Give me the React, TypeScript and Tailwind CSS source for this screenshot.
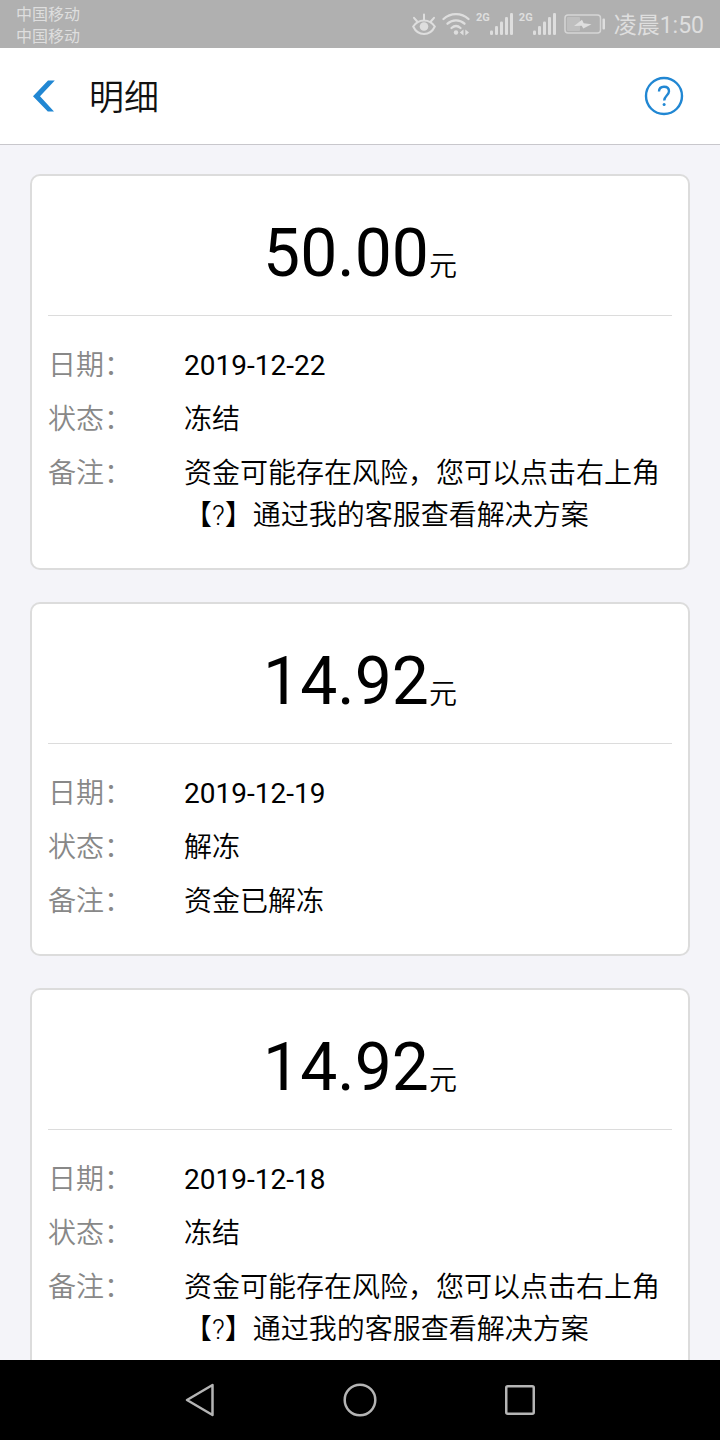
interface FundRecord {
  amount: string;
  date: string;
  status: string;
  remark: string;
}

const RISK_REMARK = "资金可能存在风险，您可以点击右上角【?】通过我的客服查看解决方案";

const records: FundRecord[] = [
  { amount: "50.00", date: "2019-12-22", status: "冻结", remark: RISK_REMARK },
  { amount: "14.92", date: "2019-12-19", status: "解冻", remark: "资金已解冻" },
  { amount: "14.92", date: "2019-12-18", status: "冻结", remark: RISK_REMARK },
];

function EyeIcon() {
  return (
    <svg className="h-6 w-6" viewBox="0 0 24 24" fill="none" stroke="currentColor" strokeWidth="2" strokeLinecap="round">
      <path d="M1.200 14.500C3.500 10.800 7.400 8.400 12 8.400s8.500 2.400 10.800 6.100C20.500 19.400 16.600 22 12 22S3.500 19.400 1.200 14.500Z" />
      <path d="M12 8V2.500M5.200 9.500 2 5.800M18.800 9.500 22 5.800" />
      <circle cx="12" cy="14.500" r="4.300" fill="currentColor" stroke="none" />
    </svg>
  );
}

function WifiIcon() {
  return (
    <svg className="h-6 w-7" viewBox="0 0 28 24" fill="none" stroke="currentColor" strokeWidth="2.300" strokeLinecap="round">
      <path d="M1.500 7C8.500.500 19.500.500 26.500 7" />
      <path d="M5.500 11.700C10.300 7.300 17.700 7.300 22.500 11.700" />
      <path d="M9.500 16C12.200 13.600 15.800 13.600 18.500 16" />
      <circle cx="14" cy="20.500" r="2.200" fill="currentColor" stroke="none" />
      <path d="M21.500 17.500v6L17.800 20.500ZM23.300 17.500v6L27 20.500Z" fill="currentColor" stroke="none" />
    </svg>
  );
}

function SignalIcon() {
  return (
    <span className="flex items-start">
      <span className="text-[11px] leading-3 font-bold">2G</span>
      <svg className="h-6 w-[23px]" viewBox="0 0 23 24" fill="currentColor">
        <rect x="0" y="18.500" width="3" height="4.500" rx="1.300" />
        <rect x="5" y="14" width="3" height="9" rx="1.300" />
        <rect x="10" y="9.500" width="3" height="13.500" rx="1.300" />
        <rect x="15" y="5" width="3" height="18" rx="1.300" />
        <rect x="20" y="1" width="3" height="22" rx="1.300" />
      </svg>
    </span>
  );
}

function BatteryIcon() {
  return (
    <svg className="h-5 w-[42px]" viewBox="0 0 42 20" fill="currentColor">
      <rect x="1" y="1" width="35.500" height="18" rx="3" fill="none" stroke="currentColor" strokeWidth="1.500" opacity="0.8" />
      <rect x="3" y="3" width="13" height="14" rx="1" opacity="0.35" />
      <rect x="38.500" y="4.500" width="2.500" height="11" rx="1" />
      <path d="M10 12 18 5.800 19.700 9.200 27.500 10.300 19.300 14.500 17.700 11.800Z" />
    </svg>
  );
}

function StatusBar() {
  return (
    <div className="flex h-12 shrink-0 items-center justify-between bg-[#b0b0b0] px-4 text-[#dedede]">
      <div className="pt-1 text-base leading-[22px]">
        <p>中国移动</p>
        <p>中国移动</p>
      </div>
      <div className="flex items-center gap-2">
        <div className="flex items-center gap-1.5">
          <EyeIcon />
          <WifiIcon />
          <SignalIcon />
          <SignalIcon />
        </div>
        <BatteryIcon />
        <span className="pt-1 text-[23px] leading-8">凌晨1:50</span>
      </div>
    </div>
  );
}

function Header() {
  return (
    <header className="flex shrink-0 items-center border-b border-[#c8c7cc] bg-white px-8">
      <button type="button" aria-label="返回" className="flex h-24 w-[57px] items-center text-[#2187d3]">
        <svg className="h-8 w-6" viewBox="0 0 24 32" fill="currentColor">
          <path d="M16 .500h6.800L8 16.200 22 31.500h-6.200L1 16.200Z" />
        </svg>
      </button>
      <h1 className="flex-1 pt-1.5 text-[35px] leading-[48px] font-[350] text-[#111]">明细</h1>
      <button type="button" aria-label="帮助" className="p-1 text-[#2187d3]">
        <svg className="h-10 w-10" viewBox="0 0 40 40" fill="none" stroke="currentColor" strokeWidth="2.400">
          <circle cx="20" cy="20" r="18" />
          <path d="M15 15.500C15 12.200 17 10.700 20 10.700s5 1.600 5 4.600c0 3.800-4.800 4.700-4.800 9.200" />
          <circle cx="20.100" cy="28.500" r="1.500" fill="currentColor" stroke="none" />
        </svg>
      </button>
    </header>
  );
}

function RecordCard({ record }: { record: FundRecord }) {
  const rows = [
    { label: "日期：", value: record.date, font: "font-normal" },
    { label: "状态：", value: record.status, font: "font-[350]" },
    { label: "备注：", value: record.remark, font: "font-[350]" },
  ];

  return (
    <li className="shrink-0 rounded-[10px] border-2 border-[#dcdcdc] bg-white px-4 pb-[31px]">
      <p className="flex h-[140px] items-baseline justify-center border-b border-[#dcdcdc] pt-[34px] text-black">
        <span className="text-[66px] leading-[88px]">{record.amount}</span>
        <span className="text-[28px] font-[350]">元</span>
      </p>
      <dl className="flex flex-col gap-3 pt-[29px] text-[28px] leading-[42px]">
        {rows.map((row) => (
          <div key={row.label} className="flex">
            <dt className="w-[136px] shrink-0 font-[350] text-[#888]">{row.label}</dt>
            <dd className={`flex-1 text-black ${row.font}`}>{row.value}</dd>
          </div>
        ))}
      </dl>
    </li>
  );
}

function NavBar() {
  return (
    <nav className="flex h-20 shrink-0 items-center justify-center gap-[120px] bg-black text-[#b4b4b4]">
      <button type="button" aria-label="后退">
        <svg className="h-10 w-10" viewBox="0 0 40 40" fill="none" stroke="currentColor" strokeWidth="2.500" strokeLinejoin="round">
          <path d="M32.500 5v30L7 20Z" />
        </svg>
      </button>
      <button type="button" aria-label="主屏幕">
        <svg className="h-10 w-10" viewBox="0 0 40 40" fill="none" stroke="currentColor" strokeWidth="2.500">
          <circle cx="20" cy="20" r="15.300" />
        </svg>
      </button>
      <button type="button" aria-label="最近任务">
        <svg className="h-10 w-10" viewBox="0 0 40 40" fill="none" stroke="currentColor" strokeWidth="2.500">
          <rect x="6.250" y="6.250" width="27.500" height="27.500" rx="1.500" />
        </svg>
      </button>
    </nav>
  );
}

export default function App() {
  return (
    <div lang="zh-CN" className="flex h-screen flex-col bg-[#f4f4f9] font-[Roboto,'Noto_Sans_CJK_SC',sans-serif]">
      <StatusBar />
      <Header />
      <main className="min-h-0 flex-1 overflow-y-auto [scrollbar-width:none]">
        <ul className="flex flex-col gap-8 px-[30px] py-[29px]">
          {records.map((record) => (
            <RecordCard key={record.date} record={record} />
          ))}
        </ul>
      </main>
      <NavBar />
    </div>
  );
}
